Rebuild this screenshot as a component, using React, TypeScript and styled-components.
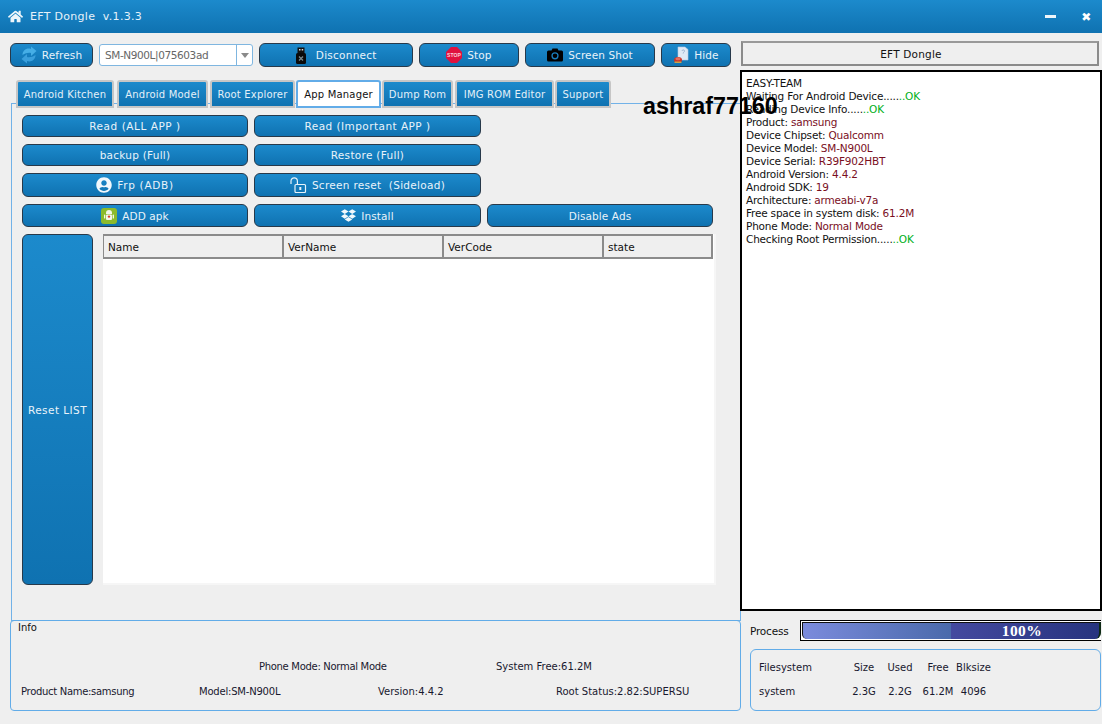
import React from "react";
import styled, { createGlobalStyle } from "styled-components";
import { FaHome, FaUserCircle, FaDropbox } from "react-icons/fa";

const Global = createGlobalStyle`
  html, body { margin: 0; padding: 0; background: #efefef; }
  #root { width: 1102px; height: 724px; overflow: hidden; }
  * { box-sizing: border-box; }
`;

const FONT = `"DejaVu Sans", "Noto Sans", sans-serif`;
const blue = "linear-gradient(#1c8acc, #0f72b1)";

const Page = styled.div`
  position: relative; width: 1102px; height: 724px; background: #efefef;
  font-family: ${FONT}; font-size: 10px; color: #111; display: flex; flex-direction: column;
`;
const TitleBar = styled.header`
  height: 33px; flex: none; background: ${blue}; color: #e6f2fa; display: flex; align-items: center;
  padding: 0 10px 0 8px; font-size: 11px; letter-spacing: 0.3px;
`;
const TitleText = styled.span` margin-left: 7px; white-space: pre; flex: 1; `;
const WinButton = styled.span<{ $ml: number }>`
  width: 11px; height: 10px; margin-left: ${(p) => p.$ml}px; display: flex; align-items: center; justify-content: center;
  color: #fff; font-weight: 700; font-size: 12px;
`;
const MinBar = styled.span` width: 11px; height: 3px; background: #eef5fa; `;
const Main = styled.main` flex: 1; display: flex; min-height: 0; `;
const Left = styled.section` width: 741px; flex: none; padding-left: 10px; display: flex; flex-direction: column; `;
const Right = styled.section` width: 362px; margin-left: -1px; flex: none; position: relative; z-index: 2; display: flex; flex-direction: column; `;
const Toolbar = styled.div` display: flex; gap: 6px; margin-top: 10px; height: 24px; `;
const Btn = styled.button<{ $w?: number; $h?: number; $ls?: number }>`
  ${(p) => (p.$w ? `width:${p.$w}px;` : "")}
  height: ${(p) => p.$h ?? 24}px; flex: none; padding: 0; margin: 0;
  border: 1px solid #27394a; border-radius: 6px; background: ${blue}; color: #e9f3fa;
  font: 10.5px ${FONT}; letter-spacing: ${(p) => p.$ls ?? 0.1}px; display: flex; align-items: center; justify-content: center; gap: 5px; white-space: pre;
`;
const Combo = styled.div`
  width: 154px; height: 22px; margin-top: 1px; flex: none; background: #fff; border: 1px solid #7fb6e0; border-radius: 3px;
  display: flex; align-items: center; padding-left: 5px; color: #666; font-size: 10.5px; letter-spacing: -0.4px; position: relative;
`;
const ComboArrow = styled.span`
  position: absolute; right: 0; top: 0; bottom: 0; width: 16px; border-left: 1px solid #7fb6e0; display: flex; align-items: center; justify-content: center;
  &::after { content: ""; border-left: 4px solid transparent; border-right: 4px solid transparent; border-top: 5px solid #8a8a8a; }
`;
const Tabs = styled.nav` display: flex; margin: 13px 0 0 6px; height: 28px; position: relative; z-index: 1; `;
const Tab = styled.div<{ $w: number; $active?: boolean; $gap?: number }>`
  width: ${(p) => p.$w}px; margin-right: ${(p) => p.$gap ?? 1}px; height: 28px; flex: none;
  display: flex; align-items: center; justify-content: center; white-space: pre; font-size: 10px; letter-spacing: 0.2px;
  border-radius: 3px 3px 0 0;
  ${(p) => p.$active
    ? "background:#fff;border:2px solid #62ace8;color:#111;"
    : `background:${blue};border:2px solid #c6c6c6;color:#e4f0f8;`}
`;
const Pane = styled.div`
  margin: -5px 0 0 1px; width: 730px; height: 518px; border: 1px solid #72b2e8; padding: 11px 27px 0 10px; display: flex; flex-direction: column;
`;
const BtnRow = styled.div<{ $mt: number }>` display: flex; gap: 6px; margin-top: ${(p) => p.$mt}px; `;
const ListArea = styled.div` display: flex; gap: 10px; margin-top: 7px; height: 351px; `;
const TableWrap = styled.div` flex: 1; background: #fff; border-right: 2px solid #f6f6f6; border-bottom: 2px solid #f6f6f6; display: flex; flex-direction: column; `;
const THead = styled.div` display: flex; height: 25px; flex: none; margin-right: 1px; background: #efefef; border: 2px solid #8b8b8b; border-left-width: 1px; `;
const TH = styled.div<{ $w: number; $last?: boolean }>`
  width: ${(p) => p.$w}px; flex: ${(p) => (p.$last ? 1 : "none")}; padding-left: 4px; display: flex; align-items: center; font-size: 10.5px;
  ${(p) => (p.$last ? "" : "border-right: 2px solid #8b8b8b;")}
`;
const InfoBox = styled.div`
  margin-top: -1px; width: 731px; height: 91px; border: 1px solid #62ace8; border-radius: 4px; padding: 0 8px 0 10px; display: flex; flex-direction: column; font-size: 10px;
`;
const InfoTitle = styled.div` height: 13px; margin: 0 0 0 -3px; padding-top: 1px; line-height: 12px; `;
const InfoRow = styled.div<{ $mt: number; $pl?: number }>` display: flex; margin-top: ${(p) => p.$mt}px; padding-left: ${(p) => p.$pl ?? 0}px; color: #18182e; height: 14px; align-items: center; `;
const InfoCell = styled.span<{ $w: number; $ls?: number }>` width: ${(p) => p.$w}px; flex: none; white-space: pre; letter-spacing: ${(p) => p.$ls ?? 0}px; `;
const Header = styled.div`
  margin: 8px 3px 0 1px; height: 25px; border: 2px solid #8b8b8b; border-top-color:#999; display: flex; align-items: center; justify-content: center; padding-right: 18px; font-size: 10.5px; letter-spacing: 0.2px; background: #efefef;
`;
const Console = styled.div`
  margin-top: 4px; height: 541px; border: 2px solid #000; background: #fff; padding: 5px 4px; line-height: 13px; font-size: 10.5px; letter-spacing: -0.2px; color: #111;
`;
const Line = styled.div` height: 13px; white-space: pre; `;
const Val = styled.span` color: #7a0f1e; `;
const Ok = styled.span` color: #00b020; `;
const ProcessRow = styled.div` display: flex; align-items: center; margin: 10px 1px 0 10px; height: 19px; `;
const ProcessLabel = styled.span` width: 50px; flex: none; font-size: 10.5px; letter-spacing: -0.2px; `;
const Bar = styled.div`
  flex: 1; height: 21px; flex-shrink: 0; background: #fff; border: 1px solid #000; border-right: none; padding: 1px 0 1px 1px; display: flex;
`;
const BarFill = styled.div`
  flex: 1; border: 1px solid #111; border-bottom: none; border-right: 2px solid #0d2a14; border-radius: 0 0 6px 5px;
  background: linear-gradient(90deg, #7b8bdc 0%, #4a6aab 50%, #44499f 50%, #27347f 100%);
  display: flex; align-items: center; justify-content: center; color: #fff; font: bold 15.5px "Liberation Serif", serif; letter-spacing: 0.4px; padding-left: 142px;
`;
const FsBox = styled.div`
  margin: 9px 1px 0 10px; height: 62px; border: 1px solid #62ace8; border-radius: 6px; padding: 5px 0 0 8px; display: grid;
  grid-template-columns: 89px 32px 40px 36px 35px; grid-auto-rows: 24px; align-items: center; font-size: 10px; color: #18182e; justify-content: start;
`;
const FsCell = styled.span<{ $left?: boolean }>` text-align: ${(p) => (p.$left ? "left" : "center")}; white-space: pre; `;
const Watermark = styled.div`
  position: absolute; left: 643px; top: 93px; z-index: 5; font: bold 23.3px "Liberation Sans", Arial, sans-serif; color: #000; white-space: pre;
`;

const RefreshIcon = () => (
  <svg width="16" height="18" viewBox="0 0 16 18">
    <path d="M1.5 9 C1.5 4 6 1.5 10 3 L10 0.5 L15.5 5 L10 10 L10 7 C7.5 6.3 4.5 7 1.5 9Z" fill="#45aee6" />
    <path d="M14.5 9 C14.5 14 10 16.5 6 15 L6 17.5 L0.5 13 L6 8 L6 11 C8.5 11.7 11.5 11 14.5 9Z" fill="#3a9fdc" />
  </svg>
);
const UsbIcon = () => (
  <svg width="12" height="17" viewBox="0 0 12 17">
    <path d="M2.5 0.5H9.5V6H2.5Z" fill="#111" />
    <rect x="4" y="2" width="1.5" height="1.5" fill="#ddd" /><rect x="6.7" y="2" width="1.5" height="1.5" fill="#ddd" />
    <rect x="1" y="6" width="10" height="11" rx="1.5" fill="#0a0a0a" />
    <path d="M4 9.5L8 13.5M8 9.5L4 13.5" stroke="#7a8a90" strokeWidth="1.3" />
  </svg>
);
const StopIcon = () => (
  <svg width="16" height="16" viewBox="0 0 16 16">
    <polygon points="5,0 11,0 16,5 16,11 11,16 5,16 0,11 0,5" fill="#e0123f" />
    <text x="8" y="9.8" textAnchor="middle" fontSize="5" fontWeight="700" fontFamily="Liberation Sans, sans-serif" fill="#fbd5dc">STOP</text>
  </svg>
);
const CameraIcon = () => (
  <svg width="16" height="14" viewBox="0 0 16 14">
    <path d="M1.5 2.5H4.5L5.5 .5H10.5L11.5 2.5H14.5A1.5 1.5 0 0 1 16 4V12A1.5 1.5 0 0 1 14.5 13.5H1.5A1.5 1.5 0 0 1 0 12V4A1.5 1.5 0 0 1 1.5 2.5Z" fill="#000" />
    <circle cx="8" cy="7.8" r="3.6" fill="#1a80c0" /><circle cx="8" cy="7.8" r="2.3" fill="#000" />
  </svg>
);
const HideIcon = () => (
  <svg width="16" height="18" viewBox="0 0 16 18">
    <path d="M5 1H12L15 3.5V14H5Z" fill="#dfe9f5" stroke="#b9cbe0" strokeWidth=".6" />
    <path d="M9 5C9 3.5 11.5 3.5 11.5 5C11.5 6.2 10.2 6 10.2 7.5" stroke="#9db4d0" fill="none" />
    <ellipse cx="5" cy="14" rx="4" ry="3" fill="#c9342a" /><ellipse cx="5" cy="12.7" rx="2.6" ry="1.5" fill="#e8705f" />
    <rect x="1.5" y="15.5" width="7" height="1.6" rx=".6" fill="#caa24a" />
  </svg>
);
const UnlockIcon = () => (
  <svg width="17" height="16" viewBox="0 0 17 16" fill="none" stroke="#e8f3fa" strokeWidth="1.2">
    <path d="M1 7V4A3.2 3.2 0 0 1 7.4 4V7" />
    <rect x="5" y="7.5" width="10.5" height="8" rx="1" />
    <rect x="9.3" y="10" width="2" height="3" fill="#e8f3fa" stroke="none" />
  </svg>
);
const ApkIcon = () => (
  <svg width="16" height="16" viewBox="0 0 16 16">
    <rect width="16" height="16" rx="3" fill="#8cbb2c" />
    <path d="M5 5A3 3 0 0 1 11 5V6H5Z" fill="#f4f7e9" />
    <rect x="5" y="6.6" width="6" height="5.4" rx="1" fill="#f4f7e9" />
    <rect x="3" y="6.6" width="1.3" height="4" rx=".6" fill="#f4f7e9" /><rect x="11.7" y="6.6" width="1.3" height="4" rx=".6" fill="#f4f7e9" />
    <circle cx="8" cy="8.6" r="1.2" fill="#d8402c" />
  </svg>
);

const OkTail = () => <>.....<Ok>..OK</Ok></>;

export default function App() {
  return (
    <Page>
      <Global />
      <TitleBar>
        <FaHome size={15} color="#eef6fb" />
        <TitleText>EFT Dongle  v.1.3.3</TitleText>
        <WinButton $ml={0}><MinBar /></WinButton>
        <WinButton $ml={25}>✖</WinButton>
      </TitleBar>
      <Main>
        <Left>
          <Toolbar>
            <Btn $w={83}><RefreshIcon />Refresh</Btn>
            <Combo>SM-N900L|075603ad<ComboArrow /></Combo>
            <Btn $w={154} $ls={0.25}><UsbIcon /> Disconnect</Btn>
            <Btn $w={100}><StopIcon />Stop</Btn>
            <Btn $w={130}><CameraIcon />Screen Shot</Btn>
            <Btn $w={70}><HideIcon />Hide</Btn>
          </Toolbar>
          <Tabs>
            <Tab $w={98} $gap={3}>Android Kitchen</Tab>
            <Tab $w={91} $gap={2}>Android Model</Tab>
            <Tab $w={85} $gap={1}>Root Explorer</Tab>
            <Tab $w={85} $active>App Manager</Tab>
            <Tab $w={71} $gap={2}>Dump Rom</Tab>
            <Tab $w={99} $gap={1}>IMG ROM Editor</Tab>
            <Tab $w={56}>Support</Tab>
          </Tabs>
          <Pane>
            <BtnRow $mt={0}><Btn $w={226} $h={22} $ls={0.55}>Read (ALL APP )</Btn><Btn $w={227} $h={22} $ls={0.45}>Read (Important APP )</Btn></BtnRow>
            <BtnRow $mt={7}><Btn $w={226} $h={22} $ls={0.25}>backup (Full)</Btn><Btn $w={227} $h={22} $ls={0.3}>Restore (Full)</Btn></BtnRow>
            <BtnRow $mt={7}><Btn $w={226} $ls={0.7}><FaUserCircle size={16} color="#f2f8fc" />Frp (ADB)</Btn><Btn $w={227} $ls={0.3}><UnlockIcon />Screen reset  (Sideload)</Btn></BtnRow>
            <BtnRow $mt={7}><Btn $w={226} $h={23}><ApkIcon />ADD apk</Btn><Btn $w={227} $h={23}><FaDropbox size={15} color="#f2f8fc" />Install</Btn><Btn $w={226} $h={23}>Disable Ads</Btn></BtnRow>
            <ListArea>
              <Btn $w={71} $h={351} $ls={0.45}>Reset LIST</Btn>
              <TableWrap>
                <THead>
                  <TH $w={180}>Name</TH><TH $w={160}>VerName</TH><TH $w={160}>VerCode</TH><TH $w={107} $last>state</TH>
                </THead>
              </TableWrap>
            </ListArea>
          </Pane>
          <InfoBox>
            <InfoTitle>Info</InfoTitle>
            <InfoRow $mt={25} $pl={238}><InfoCell $w={237} $ls={-0.3}>Phone Mode: Normal Mode</InfoCell><InfoCell $w={150}>System Free:61.2M</InfoCell></InfoRow>
            <InfoRow $mt={11}><InfoCell $w={178} $ls={-0.3}>Product Name:samsung</InfoCell><InfoCell $w={179} $ls={-0.2}>Model:SM-N900L</InfoCell><InfoCell $w={178}>Version:4.4.2</InfoCell><InfoCell $w={150}>Root Status:2.82:SUPERSU</InfoCell></InfoRow>
          </InfoBox>
        </Left>
        <Right>
          <Header>EFT Dongle</Header>
          <Console>
            <Line>EASY-TEAM</Line>
            <Line>Waiting For Android Device<OkTail /></Line>
            <Line>Reading Device Info<OkTail /></Line>
            <Line>Product: <Val>samsung</Val></Line>
            <Line>Device Chipset: <Val>Qualcomm</Val></Line>
            <Line>Device Model: <Val>SM-N900L</Val></Line>
            <Line>Device Serial: <Val>R39F902HBT</Val></Line>
            <Line>Android Version: <Val>4.4.2</Val></Line>
            <Line>Android SDK: <Val>19</Val></Line>
            <Line>Architecture: <Val>armeabi-v7a</Val></Line>
            <Line>Free space in system disk: <Val>61.2M</Val></Line>
            <Line>Phone Mode: <Val>Normal Mode</Val></Line>
            <Line>Checking Root Permission<OkTail /></Line>
          </Console>
          <ProcessRow><ProcessLabel>Process</ProcessLabel><Bar><BarFill>100%</BarFill></Bar></ProcessRow>
          <FsBox>
            <FsCell $left>Filesystem</FsCell><FsCell>Size</FsCell><FsCell>Used</FsCell><FsCell>Free</FsCell><FsCell>Blksize</FsCell>
            <FsCell $left>system</FsCell><FsCell>2.3G</FsCell><FsCell>2.2G</FsCell><FsCell>61.2M</FsCell><FsCell>4096</FsCell>
          </FsBox>
        </Right>
      </Main>
      <Watermark>ashraf77160</Watermark>
    </Page>
  );
}
